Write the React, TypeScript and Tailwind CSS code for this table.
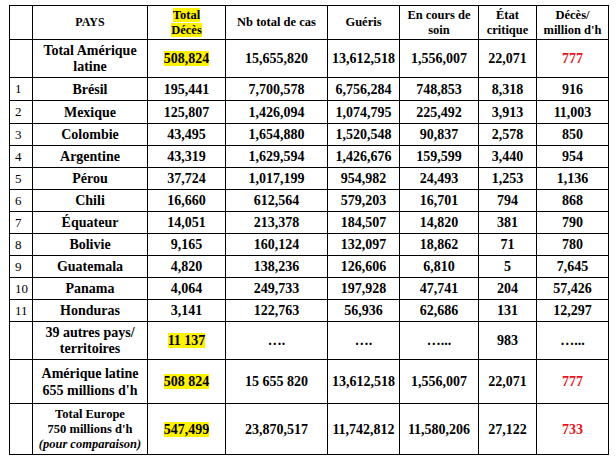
import type { ReactNode } from 'react';

type Row = {
  n: string;
  pays: string;
  cells: string[];
};

const rows: Row[] = [
  { n: '1', pays: 'Brésil', cells: ['195,441', '7,700,578', '6,756,284', '748,853', '8,318', '916'] },
  { n: '2', pays: 'Mexique', cells: ['125,807', '1,426,094', '1,074,795', '225,492', '3,913', '11,003'] },
  { n: '3', pays: 'Colombie', cells: ['43,495', '1,654,880', '1,520,548', '90,837', '2,578', '850'] },
  { n: '4', pays: 'Argentine', cells: ['43,319', '1,629,594', '1,426,676', '159,599', '3,440', '954'] },
  { n: '5', pays: 'Pérou', cells: ['37,724', '1,017,199', '954,982', '24,493', '1,253', '1,136'] },
  { n: '6', pays: 'Chili', cells: ['16,660', '612,564', '579,203', '16,701', '794', '868'] },
  { n: '7', pays: 'Équateur', cells: ['14,051', '213,378', '184,507', '14,820', '381', '790'] },
  { n: '8', pays: 'Bolivie', cells: ['9,165', '160,124', '132,097', '18,862', '71', '780'] },
  { n: '9', pays: 'Guatemala', cells: ['4,820', '138,236', '126,606', '6,810', '5', '7,645'] },
  { n: '10', pays: 'Panama', cells: ['4,064', '249,733', '197,928', '47,741', '204', '57,426'] },
  { n: '11', pays: 'Honduras', cells: ['3,141', '122,763', '56,936', '62,686', '131', '12,297'] },
];

function Cell({ children, className = '' }: { children?: ReactNode; className?: string }) {
  return (
    <div className={`flex items-center justify-center text-center border-r border-b border-black font-bold leading-[15px] ${className}`}>
      {children}
    </div>
  );
}

function NumCell({ children }: { children?: ReactNode }) {
  return (
    <div className="flex items-center pl-[5px] border-r border-b border-black text-[13px]">
      {children}
    </div>
  );
}

function Hl({ children }: { children: ReactNode }) {
  return <span className="bg-[#fff200] [box-decoration-break:clone]">{children}</span>;
}

export default function App() {
  return (
    <div className="w-[616px] h-[463px] bg-white pt-[5px] pl-[9px] text-black font-['Liberation_Serif',serif]">
      <div className="grid w-max grid-cols-[23px_115px_78px_102px_72px_79px_58px_72px] grid-rows-[34px_38px_23px_23px_22px_22px_22px_22px_22px_22px_22px_22px_22px_38px_44px_51px] border-l border-t border-black">
        {/* Header */}
        <NumCell />
        <Cell className="text-[12px]">PAYS</Cell>
        <Cell className="text-[12.5px] leading-[14px]">
          <span><Hl>Total</Hl><br /><Hl>Décès</Hl></span>
        </Cell>
        <Cell className="text-[12.5px]">Nb total de cas</Cell>
        <Cell className="text-[12.5px]">Guéris</Cell>
        <Cell className="text-[12.5px] leading-[14px]">En cours de<br />soin</Cell>
        <Cell className="text-[12.5px] leading-[14px]">État<br />critique</Cell>
        <Cell className="text-[12.5px] leading-[14px]">Décès/<br />million d'h</Cell>

        {/* Total Amérique latine */}
        <NumCell />
        <Cell className="text-[14px] leading-[16px]">Total Amérique<br />latine</Cell>
        <Cell className="text-[14px]"><Hl>508,824</Hl></Cell>
        <Cell className="text-[14px]">15,655,820</Cell>
        <Cell className="text-[14px]">13,612,518</Cell>
        <Cell className="text-[14px]">1,556,007</Cell>
        <Cell className="text-[14px]">22,071</Cell>
        <Cell className="text-[14px] text-[#e8141c]">777</Cell>

        {rows.map(r => (
          <div key={r.n} className="contents">
            <NumCell>{r.n}</NumCell>
            <Cell className="text-[14px]">{r.pays}</Cell>
            {r.cells.map((c, i) => (
              <Cell key={i} className="text-[14px]">
                {c}
              </Cell>
            ))}
          </div>
        ))}

        {/* 39 autres */}
        <NumCell />
        <Cell className="text-[14px] leading-[16px]">39 autres pays/<br />territoires</Cell>
        <Cell className="text-[14px]"><Hl>11 137</Hl></Cell>
        <Cell className="text-[14px]">….</Cell>
        <Cell className="text-[14px]">….</Cell>
        <Cell className="text-[14px]">…...</Cell>
        <Cell className="text-[14px]">983</Cell>
        <Cell className="text-[14px]">…...</Cell>

        {/* Amérique latine */}
        <NumCell />
        <Cell className="text-[14px] leading-[17px]">Amérique latine<br />655 millions d'h</Cell>
        <Cell className="text-[14px]"><Hl>508 824</Hl></Cell>
        <Cell className="text-[14px]">15 655 820</Cell>
        <Cell className="text-[14px]">13,612,518</Cell>
        <Cell className="text-[14px]">1,556,007</Cell>
        <Cell className="text-[14px]">22,071</Cell>
        <Cell className="text-[14px] text-[#e8141c]">777</Cell>

        {/* Total Europe */}
        <NumCell />
        <Cell className="text-[12.5px] leading-[15px]">
          <span>Total Europe<br />750 millions d'h<br /><i>(pour comparaison)</i></span>
        </Cell>
        <Cell className="text-[14px]"><Hl>547,499</Hl></Cell>
        <Cell className="text-[14px]">23,870,517</Cell>
        <Cell className="text-[14px]">11,742,812</Cell>
        <Cell className="text-[14px]">11,580,206</Cell>
        <Cell className="text-[14px]">27,122</Cell>
        <Cell className="text-[14px] text-[#e8141c]">733</Cell>
      </div>
    </div>
  );
}
